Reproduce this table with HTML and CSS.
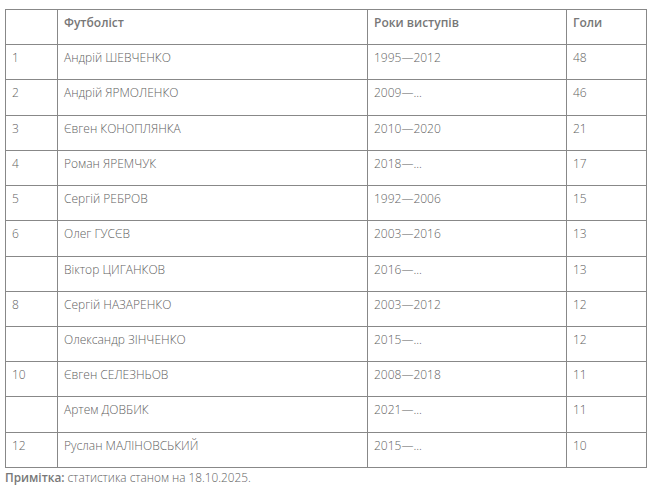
FILE: index.html
```html
<!DOCTYPE html>
<html lang="uk">
<head>
<meta charset="utf-8">
<link rel="stylesheet" href="styles.css">
</head>
<body>
<div class="wrap">
<table class="stats">
<colgroup>
<col class="c1"><col class="c2"><col class="c3"><col class="c4">
</colgroup>
<thead>
<tr><th></th><th>Футболіст</th><th>Роки виступів</th><th>Голи</th></tr>
</thead>
<tbody>
<tr><td>1</td><td>Андрій ШЕВЧЕНКО</td><td>1995—2012</td><td>48</td></tr>
<tr><td>2</td><td>Андрій ЯРМОЛЕНКО</td><td>2009—...</td><td>46</td></tr>
<tr><td>3</td><td>Євген КОНОПЛЯНКА</td><td>2010—2020</td><td>21</td></tr>
<tr><td>4</td><td>Роман ЯРЕМЧУК</td><td>2018—...</td><td>17</td></tr>
<tr><td>5</td><td>Сергій РЕБРОВ</td><td>1992—2006</td><td>15</td></tr>
<tr><td>6</td><td>Олег ГУСЄВ</td><td>2003—2016</td><td>13</td></tr>
<tr><td></td><td>Віктор ЦИГАНКОВ</td><td>2016—...</td><td>13</td></tr>
<tr><td>8</td><td>Сергій НАЗАРЕНКО</td><td>2003—2012</td><td>12</td></tr>
<tr><td></td><td>Олександр ЗІНЧЕНКО</td><td>2015—...</td><td>12</td></tr>
<tr><td>10</td><td>Євген СЕЛЕЗНЬОВ</td><td>2008—2018</td><td>11</td></tr>
<tr><td></td><td>Артем ДОВБИК</td><td>2021—...</td><td>11</td></tr>
<tr><td>12</td><td>Руслан МАЛІНОВСЬКИЙ</td><td>2015—...</td><td>10</td></tr>
</tbody>
</table>
<p class="note"><b>Примітка:</b> статистика станом на 18.10.2025.</p>
</div>
</body>
</html>
```

FILE: styles.css
```css
html, body {
  margin: 0;
  padding: 0;
  background: #fff;
}
.wrap {
  padding: 9px 3px 0 5px;
  font-family: "Open Sans", "Noto Sans", sans-serif;
  font-weight: 300;
  font-size: 12px;
  color: #5f5f5f;
}
.stats {
  width: 641px;
  border-collapse: collapse;
  table-layout: fixed;
}
.c1 { width: 52px; }
.c2 { width: 310px; }
.c3 { width: 199px; }
.c4 { width: 80px; }
.stats th, .stats td {
  border: 1px solid #888;
  height: 35.23px;
  box-sizing: border-box;
  padding: 5px 5px 0 6px;
  vertical-align: top;
  text-align: left;
  line-height: 16px;
}
.stats th {
  font-weight: 600;
  color: #777;
}
.note {
  margin: 0;
  line-height: 18px;
  font-size: 11.8px;
}
.note b {
  font-weight: 600;
  color: #777;
}
```
